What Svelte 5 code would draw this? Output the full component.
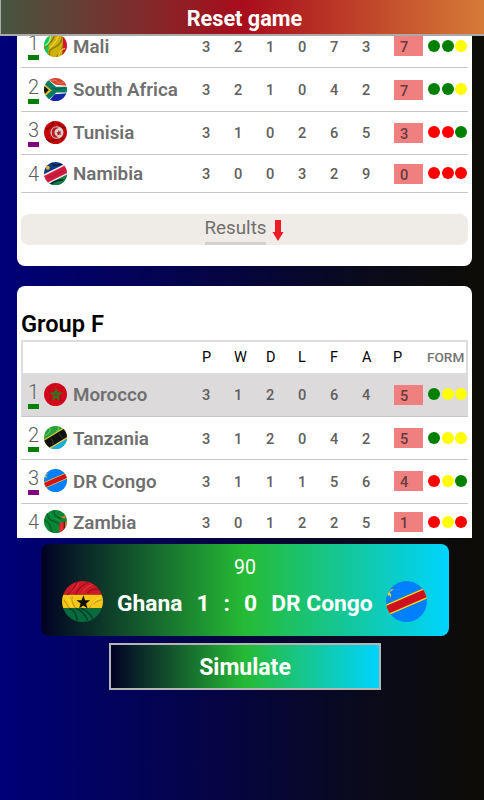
<script>
  const columns = ['P', 'W', 'D', 'L', 'F', 'A', 'P'];

  const groupE = [
    { name: 'Mali', stats: [3, 2, 1, 0, 7, 3], points: 7, form: 'wwd' },
    { name: 'South Africa', stats: [3, 2, 1, 0, 4, 2], points: 7, form: 'wwd' },
    { name: 'Tunisia', stats: [3, 1, 0, 2, 6, 5], points: 3, form: 'llw' },
    { name: 'Namibia', stats: [3, 0, 0, 3, 2, 9], points: 0, form: 'lll' }
  ];

  const groupF = [
    { name: 'Morocco', stats: [3, 1, 2, 0, 6, 4], points: 5, form: 'wdd', active: true },
    { name: 'Tanzania', stats: [3, 1, 2, 0, 4, 2], points: 5, form: 'wdd' },
    { name: 'DR Congo', stats: [3, 1, 1, 1, 5, 6], points: 4, form: 'ldw' },
    { name: 'Zambia', stats: [3, 0, 1, 2, 2, 5], points: 1, form: 'ldl' }
  ];
</script>

{#snippet flag(team)}
  <svg class="flag" viewBox="0 0 24 24" aria-hidden="true">
    {#if team === 'Mali'}
      <path fill="#0fc75a" d="M0 0h8v24H0z" />
      <path fill="#cdb008" d="M6 0h14v24H4z" />
      <path fill="#d5142c" d="M20 0h4v24h-5z" />
      <path fill="none" stroke="#8f7a04" stroke-width="1.5" d="M11 0Q10 7 4 11T2 20M19 3Q18 11 11 14T6 22M20 12Q17 20 13 24" />
      <path fill="none" stroke="#e9d43a" stroke-width="1.3" d="M15 2Q12 10 6 14M22 15Q16 16 15 24" />
      <path fill="none" stroke="#83ffb2" stroke-width="1.4" d="M1 12Q6 10 7 2" />
    {:else if team === 'South Africa'}
      <path fill="#fff" d="M0 0h24v24H0z" />
      <path fill="#d5442e" d="M2 0h22v8L12 7z" />
      <path fill="#1526a7" d="M11 17l13-1v8H5z" />
      <path fill="none" stroke="#087b60" stroke-width="6" d="M0 2l11 10h13M0 23l11-10" />
      <path fill="#e9b82e" d="M0 6l8 7-8 7z" />
      <path fill="#101510" d="M0 8l5 4.500-5 5z" />
      <path fill="none" stroke="#055b49" d="M8 10q6 3 10 1t6 0" />
      <path fill="none" stroke="#f0816a" d="M6 3q6-2 8 1t8 0" />
    {:else if team === 'Tunisia'}
      <path fill="#c60508" d="M0 0h24v24H0z" />
      <path fill="none" stroke="#8a0000" stroke-width="1.6" d="M2 9Q8 7 10 0M15 2q1 6 8 5M2 19q6 4 9 1t10-2" />
      <ellipse cx="13.500" cy="12" rx="6.800" ry="6.600" fill="#d9d1ce" />
      <path fill="#b51d24" d="M16 7q-8-2-8 5t8 5q-5-1-5-5t5-5z" />
      <path fill="#b51d24" d="M15 9l1 2 2 0-1 1.500 1 2-2-.5-2 1v-2l-1-1 2-.5z" />
    {:else if team === 'Namibia'}
      <path fill="#103b83" d="M0 0h24v24H0z" />
      <path fill="#0b8036" d="M0 24L24 8v16z" />
      <path stroke="#eee" stroke-width="11" d="M-2 20L26 6" />
      <path stroke="#d31b40" stroke-width="8" d="M-2 20L26 6" />
      <circle cx="4" cy="6" r="2" fill="#e3b627" />
      <path fill="none" stroke="#061d44" stroke-width="1.5" d="M8 1q2 4 7 2t7 0M7 23q7-5 13-4" />
      <path fill="none" stroke="#a31a36" d="M4 15q3 2 7-1t10-5" />
    {:else if team === 'Morocco'}
      <path fill="#d4061a" d="M0 0h24v24H0z" />
      <path fill="none" stroke="#a80b1b" stroke-width=".7" d="M2 7q7 3 10-1t11 1M3 18q8-4 18 1M8 1q-3 8-1 22M20 3q-5 7-2 18" />
      <path fill="none" stroke="#20801f" stroke-width="1.2" d="M12.500 6.500l3 10.500-8-6.500h10.500l-8.500 6.500z" />
    {:else if team === 'Tanzania'}
      <path fill="#28a139" d="M0 0h24v24H0z" />
      <path fill="#1caede" d="M0 24L24 7v17z" />
      <path stroke="#f3ce36" stroke-width="11.500" d="M-2 22L26 5" />
      <path stroke="#10130d" stroke-width="9" d="M-2 22L26 5" />
      <path fill="none" stroke="#62c967" stroke-width="1.2" d="M6 1q2 6-5 9M16 0q0 3-3 6" />
      <path fill="none" stroke="#39413d" d="M7 13q4 3 2 6M16 8q0 3 4 4" />
    {:else if team === 'DR Congo'}
      <path fill="#007fff" d="M0 0h24v24H0z" />
      <path stroke="#f7d618" stroke-width="6.400" d="M-3 18.500L27 5.500" />
      <path stroke="#ce1021" stroke-width="4.700" d="M-3 18.500L27 5.500" />
      <path fill="#f2cf2b" d="M5 4.700l-2 .3-2.200 2.300.2 1.200 1.200 0 .7 1.500.1-2-1-1.500z" />
    {:else if team === 'Zambia'}
      <path fill="#078735" d="M0 0h24v24H0z" />
      <path fill="none" stroke="#045d25" stroke-width="1.400" d="M3 2q0 8 8 10t6 11M10 0q0 7 8 9M0 10q7 3 8 13" />
      <path fill="none" stroke="#1d9b4a" d="M6 1q0 7 8 9t4 12M0 14q4 3 4 9" />
      <path fill="#e62c32" d="M16 14l5-2v12h-5z" />
      <path fill="#5b1d1c" d="M20.500 12h1.500v12h-1.500z" />
      <path fill="#e17c26" d="M22 12h2v12h-2zM16 6l3 1 4-2-1 4-3-1z" />
    {:else if team === 'Ghana'}
      <path fill="#ce1926" d="M0 0h24v8H0z" />
      <path fill="#f5c718" d="M0 8h24v8H0z" />
      <path fill="#086b3d" d="M0 16h24v8H0z" />
      <path fill="none" stroke="#9d0c20" stroke-width=".7" d="M3 8Q7 6 9 0M8 8q1-4 7-7M15 7q2-3 7-2" />
      <path fill="none" stroke="#e9424a" stroke-width=".5" d="M5 7q4-3 5-6M12 7q1-3 6-5" />
      <path fill="none" stroke="#c99b0b" stroke-width=".7" d="M1 11q2 2 3 5M6 9q-1 3 2 7M16 16q2-4 7-5" />
      <path fill="none" stroke="#04412a" stroke-width=".9" d="M4 16q4 1 5 7M11 16q5 2 7 6M8 16q5 2 7 7" />
      <path fill="none" stroke="#ffe766" stroke-width=".4" d="M3 9q1 3 3 6M17 15q2-4 5-5" />
      <path fill="#111006" d="M12.500 8.300l1 3h3l-2.400 1.900.9 2.900-2.500-1.800-2.500 1.800.9-2.900-2.400-1.900h3z" />
    {/if}
  </svg>
{/snippet}

{#snippet teamRow(team, index)}
  <div class="row" class:active={team.active} class:last={index === 3}>
    <div class="team">
      <span class="position">
        {index + 1}
        {#if index < 3}
          <i class="mark" class:maybe={index === 2}></i>
        {/if}
      </span>
      {@render flag(team.name)}
      <span class="name">{team.name}</span>
    </div>
    {#each team.stats as value}
      <span class="stat">{value}</span>
    {/each}
    <span class="points">{team.points}</span>
    <div class="form">
      {#each team.form as result}
        <i class="dot {result}"></i>
      {/each}
    </div>
  </div>
{/snippet}

<main>
  <button class="reset">Reset game</button>

  <div class="groups">
    <section class="card first">
      {#each groupE as team, i}
        {@render teamRow(team, i)}
      {/each}
      <div class="results">
        <span>Results</span>
        <svg width="12" height="21" viewBox="0 0 12 21" aria-hidden="true">
          <path fill="#ed1c24" d="M3 0h6v12h2.500L6 21 .5 12H3z" />
        </svg>
      </div>
    </section>

    <section class="card second">
      <h2>Group F</h2>
      <div class="row head">
        <span></span>
        {#each columns as column}
          <span>{column}</span>
        {/each}
        <span class="form-title">FORM</span>
      </div>
      {#each groupF as team, i}
        {@render teamRow(team, i)}
      {/each}
    </section>
  </div>

  <div class="match">
    <span class="minute">90</span>
    <div class="score">
      {@render flag('Ghana')}
      <span class="home">Ghana</span>
      <span class="goals">1</span>
      <span class="colon">:</span>
      <span class="goals">0</span>
      <span class="away">DR Congo</span>
      {@render flag('DR Congo')}
    </div>
  </div>

  <button class="simulate">Simulate</button>
</main>

<style>
  :global(body) {
    margin: 0;
  }

  main {
    height: 800px;
    display: flex;
    flex-direction: column;
    overflow: hidden;
    font-family: Roboto, sans-serif;
    background: linear-gradient(90deg, #000078 0%, #05053e 50%, #0a0a1c 75%, #0d0c05 100%);
  }

  button {
    box-sizing: border-box;
    font-family: inherit;
    font-weight: 700;
    color: #fff;
    padding: 0;
  }

  .reset {
    flex: none;
    width: 486px;
    height: 36px;
    padding: 2px 0 0 4px;
    font-size: 21.7px;
    border: 2px solid #aaa;
    border-top: 0;
    border-left-width: 1px;
    background: linear-gradient(90deg, #465640 0%, #a90c1c 50%, #d67b37 100%);
  }

  .groups {
    flex: none;
    height: 502px;
    margin: 0 12px 0 17px;
    overflow: hidden;
  }

  .card {
    box-sizing: border-box;
    padding: 0 4px;
    background: #fff;
    border-radius: 8px;
  }

  .first {
    height: 240.5px;
    margin-top: -11px;
  }

  .second {
    height: 300px;
    margin-top: 20px;
    padding-top: 24px;
  }

  h2 {
    margin: 0;
    height: 30px;
    line-height: 29px;
    font-size: 23.6px;
    font-weight: 600;
    color: #000;
  }

  .row {
    box-sizing: border-box;
    height: 43.4px;
    display: grid;
    grid-template-columns: 181px repeat(6, 32px) 34px 40px;
    align-items: center;
    border-bottom: 1px solid #c8c8c8;
    color: #606060;
  }

  .row.last {
    height: 38px;
  }

  .row.active {
    background: #dcdadb;
  }

  .row.head {
    height: 34px;
    grid-template-columns: 179px repeat(5, 32px) 31px 34px 40px;
    border: 2px solid #ddd;
    border-bottom-width: 1px;
    font-size: 14.5px;
    color: #000;
  }

  .row.head .form-title {
    font-size: 13.6px;
    font-weight: 500;
    color: #757575;
  }

  .team {
    display: flex;
    align-items: center;
    padding-left: 7px;
  }

  .position {
    width: 16px;
    font-size: 20px;
    font-weight: 300;
    line-height: 22px;
  }

  .mark {
    display: block;
    width: 11px;
    height: 5px;
    margin-top: 1px;
    background: green;
  }

  .mark.maybe {
    background: purple;
  }

  .flag {
    flex: none;
    width: 23px;
    height: 23px;
    border-radius: 50%;
  }

  .team .flag {
    margin-top: -1px;
  }

  .name {
    margin: 1px 0 0 6px;
    font-size: 18.8px;
    font-weight: 600;
    color: #707070;
  }

  .stat,
  .points {
    font-size: 14.6px;
    font-weight: 500;
  }

  .stat {
    padding-top: 1px;
  }

  .points {
    box-sizing: border-box;
    width: 29px;
    height: 20px;
    padding-left: 6px;
    line-height: 22px;
    background: lightcoral;
    color: #653b3b;
  }

  .form {
    display: flex;
    gap: 1.6px;
    margin-top: -1px;
  }

  .dot {
    width: 12px;
    height: 12px;
    border-radius: 50%;
  }

  .dot.w {
    background: green;
  }

  .dot.d {
    background: yellow;
  }

  .dot.l {
    background: red;
  }

  .results {
    box-sizing: border-box;
    height: 31px;
    margin-top: 21px;
    display: flex;
    justify-content: center;
    gap: 6px;
    border-radius: 8px;
    background: #efebe7;
    font-size: 18.8px;
    color: #706f6d;
  }

  .results span {
    box-sizing: border-box;
    height: 31px;
    line-height: 28px;
    border-bottom: 3px solid #d2d2d2;
  }

  .results svg {
    margin-top: 6px;
  }

  .match {
    box-sizing: border-box;
    flex: none;
    width: 408px;
    height: 92px;
    margin: 6px 0 0 41px;
    padding-top: 11px;
    border-radius: 8px;
    color: #fff;
    text-align: center;
    background: linear-gradient(90deg, #020024 0%, #26bb35 50%, #00d4ff 100%);
  }

  .minute {
    display: block;
    height: 26px;
    line-height: 25px;
    font-size: 19.5px;
  }

  .score {
    display: flex;
    align-items: center;
    padding-left: 21px;
    font-size: 22.8px;
    font-weight: 700;
  }

  .score .flag {
    width: 41px;
    height: 41px;
  }

  .home {
    margin: 3px 14px 0 14px;
  }

  .goals,
  .away {
    margin-top: 3px;
  }

  .colon {
    margin: 3px 14px 0;
  }

  .away {
    margin: 3px 13px 0 14px;
    white-space: nowrap;
  }

  .simulate {
    flex: none;
    width: 272px;
    height: 47px;
    margin: 7px 0 0 109px;
    padding-top: 2px;
    border: 2px solid #b5b5b5;
    font-size: 23px;
    background: linear-gradient(90deg, #020024 0%, #26bb35 50%, #00d4ff 100%);
  }
</style>
